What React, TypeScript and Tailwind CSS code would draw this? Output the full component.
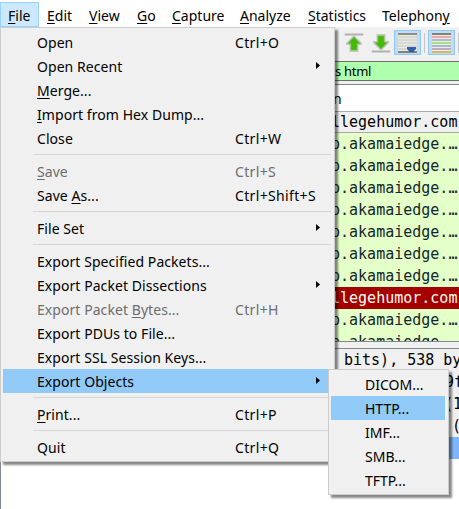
import React from "react";

type Item = { label?: string; u?: number; key?: string; arrow?: boolean; off?: boolean; on?: boolean };

const items: Item[] = [
  { label: "Open", key: "Ctrl+O" },
  { label: "Open Recent", arrow: true },
  { label: "Merge...", u: 0 },
  { label: "Import from Hex Dump...", u: 0 },
  { label: "Close", key: "Ctrl+W" },
  {},
  { label: "Save", u: 0, key: "Ctrl+S", off: true },
  { label: "Save As...", u: 5, key: "Ctrl+Shift+S" },
  {},
  { label: "File Set", arrow: true },
  {},
  { label: "Export Specified Packets..." },
  { label: "Export Packet Dissections", arrow: true },
  { label: "Export Packet Bytes...", u: 14, key: "Ctrl+H", off: true },
  { label: "Export PDUs to File..." },
  { label: "Export SSL Session Keys..." },
  { label: "Export Objects", arrow: true, on: true },
  {},
  { label: "Print...", u: 0, key: "Ctrl+P" },
  {},
  { label: "Quit", key: "Ctrl+Q" },
];

function Mnemonic({ text, at }: { text: string; at?: number }) {
  if (at === undefined) return <>{text}</>;
  return (
    <>
      {text.slice(0, at)}
      <span className="underline decoration-1 underline-offset-2">{text[at]}</span>
      {text.slice(at + 1)}
    </>
  );
}

const menus: [string, number, string][] = [
  ["File", 0, "w-[39px] pl-[7px] border border-[#99d1ff] bg-[#cce8ff]"],
  ["Edit", 0, "w-[42px] pl-[8px]"],
  ["View", 0, "w-[48px] pl-[8px]"],
  ["Go", 0, "w-[35px] pl-[8px]"],
  ["Capture", 0, "w-[68px] pl-[8px]"],
  ["Analyze", 0, "w-[68px] pl-[8px]"],
  ["Statistics", 0, "w-[74px] pl-[8px]"],
  ["Telephony", 8, "w-[84px] pl-[8px]"],
];

function Jump({ down }: { down?: boolean }) {
  return (
    <svg width="20" height="20" viewBox="0 0 20 20" className={down ? "-scale-y-100" : ""}>
      <path d="M1.5 1.5h17" stroke="#b0b0b0" strokeWidth="2" strokeLinecap="round" />
      <path d="M10 2 18 10v2h-3.5v7h-9v-7H2v-2z" fill="#c4c4c4" />
      <path d="M10 4 16 10.5h-3V17H7v-6.5H4z" fill="#46b80b" stroke="#65c52d" strokeWidth=".7" />
    </svg>
  );
}

function Lines({ colors, marker }: { colors: string[]; marker?: boolean }) {
  return (
    <svg width="19" height="20" viewBox="0 0 19 20">
      <rect width="19" height="20" fill="#e9ebe4" />
      {colors.map((c, i) => (
        <path key={i} d={`M0 ${1 + i * 3}h19`} stroke={c} strokeWidth={i === 0 || i === colors.length - 1 ? 1.4 : 1} />
      ))}
      {marker && <path d="M9 14h9v2l-2 2v1h-5v-1l-2-2z" fill="#2f5fa7" />}
    </svg>
  );
}

const rows = ["a", "a", "a", "a", "a", "a", "a", "red", "a", "a"];

export default function App() {
  return (
    <div className="relative h-[509px] w-[459px] overflow-hidden bg-white font-['Noto_Sans','Open_Sans',sans-serif] text-[14px] text-black">
      <div className="flex h-[27px] pt-[2px]">
        {menus.map(([m, u, c]) => (
          <div key={m} className={`${c} box-border flex h-[25px] shrink-0 items-center pt-[2px] leading-none whitespace-nowrap`}>
            <span><Mnemonic text={m} at={u} /></span>
          </div>
        ))}
      </div>

      <div className="ml-[329px] flex h-[482px] flex-col overflow-hidden bg-[#f0f0f0]">
        <div className="flex h-[34px] shrink-0 items-start pt-[3px] pl-[15px]">
          <div className="pt-[3px]"><Jump /></div>
          <div className="ml-[7px] pt-[3px]"><Jump down /></div>
          <div className="ml-[3px] flex h-[25px] w-[27px] shrink-0 items-center justify-center border border-[#91c8f6] bg-[#c0dcf3]">
            <Lines marker colors={["#666", "#c4c6be", "#c4c6be", "#c4c6be", "#c4c6be", "#c4c6be", "#555"]} />
          </div>
          <div className="mt-[3px] ml-[3px] h-[20px] w-px shrink-0 bg-[#c6c6c6]" />
          <div className="ml-[3px] flex h-[25px] w-[27px] shrink-0 items-center justify-center border border-[#91c8f6] bg-[#c0dcf3]">
            <Lines colors={["#555", "#ec6b6b", "#678fc5", "#70d12d", "#6386b8", "#8d70a8", "#c9a52d"]} />
          </div>
          <div className="mt-[3px] ml-[3px] h-[20px] w-px shrink-0 bg-[#c6c6c6]" />
        </div>
        <div className="flex h-[20px] shrink-0 items-center border-y border-[#6d6d6d] bg-[#afffaf] pl-[6px] text-[13px] leading-none tracking-[-0.3px]">s html</div>
        <div className="mt-[3px] flex h-[27px] shrink-0 items-center border-t border-[#828790] bg-white pt-[2px] pl-[4px] leading-none">n</div>
        <div className="flex h-[22px] shrink-0 items-center border-y border-[#a9a9a9] pl-[2px] font-['DejaVu_Sans_Mono',monospace] text-[15px] leading-none whitespace-nowrap">llegehumor.com</div>
        <div className="h-[208px] shrink-0 overflow-hidden bg-[#e4ffc7] font-['DejaVu_Sans_Mono',monospace] text-[15px] text-[#12272e]">
          {rows.map((r, i) => (
            <div key={i} className={`flex h-[22px] items-center pl-[2px] leading-none whitespace-nowrap ${r === "red" ? "bg-[#a40000] text-[#fffcf0]" : ""}`}>
              {r === "red" ? "llegehumor.com" : "p.akamaiedge.…"}
            </div>
          ))}
        </div>
        <div className="h-[8px] shrink-0 border-y border-[#828790]" />
        <div className="flex-1 bg-white font-['DejaVu_Sans_Mono',monospace] text-[15px] leading-[23px] whitespace-pre">
          <div className="h-[22px] bg-[#f0f0f0] pl-[15px]">bits), 538 by</div>
          <div className="h-[22px] bg-[#f0f0f0] pl-[116px]">9f</div>
          <div className="h-[22px] bg-[#f0f0f0] pl-[115px]">(1</div>
          <div className="h-[22px] bg-[#f0f0f0] pl-[123px]">(</div>
          <div className="h-[22px] bg-[#80b4f8]" />
        </div>
      </div>

      <div className="absolute top-[461px] left-0 h-[48px] w-px bg-[#828790]" />
      <div className="absolute top-[27px] left-0 h-[435px] w-[335px] border border-[#ccc] bg-[#f0f0f0] py-[2px] pr-[3px] pl-[2px] shadow-[3px_3px_2px_#0007]">
        {items.map((it, i) =>
          it.label ? (
            <div key={i} className={`flex h-[24px] items-center pl-[34px] leading-none whitespace-nowrap ${it.on ? "bg-[#91c9f7]" : ""} ${it.off ? "text-[#6d6d6d]" : ""}`}>
              <span className="w-[198px] pt-[2px] tracking-[0.06px]"><Mnemonic text={it.label} at={it.u} /></span>
              <span className="w-[81px] pt-[2px] tracking-[0.35px]">{it.key}</span>
              {it.arrow && <svg width="4" height="7" className="mb-px"><path d="M0 0 4 3.5 0 7z" /></svg>}
            </div>
          ) : (
            <div key={i} className="h-[9px] pt-[4px] pl-[30px]"><div className="h-px bg-[#d7d7d7]" /></div>
          )
        )}
      </div>

      <div className="absolute top-[369px] left-[328px] h-[126px] w-[121px] border border-[#ccc] bg-[#f0f0f0] py-[2px] pr-[3px] pl-[2px] shadow-[3px_3px_2px_#0007]">
        {["DICOM...", "HTTP...", "IMF...", "SMB...", "TFTP..."].map((t) => (
          <div key={t} className={`flex h-[24px] items-center pt-[2px] pl-[34px] leading-none ${t === "HTTP..." ? "bg-[#91c9f7]" : ""}`}>{t}</div>
        ))}
      </div>
    </div>
  );
}
